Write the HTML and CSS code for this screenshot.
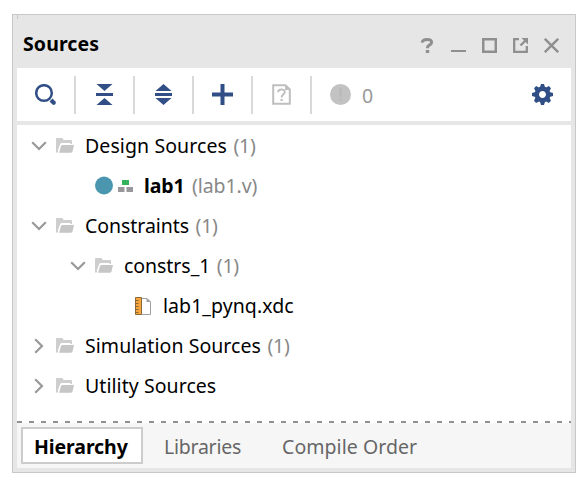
FILE: index.html
```html
<!DOCTYPE html>
<html lang="en">
<head>
<meta charset="utf-8">
<title>Sources</title>
<link rel="stylesheet" href="styles.css">
</head>
<body>
<svg class="defs" width="0" height="0">
  <symbol id="down" viewBox="0 0 16 10"><path d="M1.2 1.2 8 8l6.800-6.800" fill="none" stroke="#999" stroke-width="2.200"/></symbol>
  <symbol id="right" viewBox="0 0 10 16"><path d="M1.200 1.200 8 8l-6.800 6.800" fill="none" stroke="#999" stroke-width="2.200"/></symbol>
  <symbol id="folder" viewBox="0 0 18 15"><path d="M0 14.500V1Q0 0 1 0H6.500L7.500 2H15Q16 2 16 3V6H14.500V5H5.500Q4.500 5 4 6.500L2 12V14.500Z" fill="#cecece"/><path d="M6.500 7H18L16.500 13.500Q16 14.800 14.700 14.800H3L5 8.300Q5.400 7 6.500 7Z" fill="#c6c6c6"/></symbol>
</svg>
<main class="panel">
  <header class="title">
    <h1>Sources</h1>
    <div class="controls">
      <svg width="15" height="17" viewBox="0 0 15 17"><path d="M2.200 5.600Q2.500 2.400 7 2.400 11.600 2.400 11.600 5.300 11.600 7 9.300 8.100 7.400 9 7.400 11.300" fill="none" stroke="#8f8f8f" stroke-width="3"/><path d="M5.800 13h3.400v3H5.800z" fill="#8f8f8f"/></svg>
      <svg width="15" height="15"><path d="M0 12h15v2H0z" fill="#8f8f8f"/></svg>
      <svg width="15" height="15"><path d="M1.250 1.250h12.500v12.500H1.250z" fill="none" stroke="#8f8f8f" stroke-width="2.500"/></svg>
      <svg width="15" height="15"><path d="M6 1.200H1.200V13.800H13.800V8M7.500 7.500 12.500 2.500" fill="none" stroke="#8f8f8f" stroke-width="2.300"/><path d="M8.500 0H15V6.500Z" fill="#8f8f8f"/></svg>
      <svg width="15" height="15"><path d="M.8.8 14.200 14.200M14.200.8.8 14.200" stroke="#8f8f8f" stroke-width="2.400"/></svg>
    </div>
  </header>
  <div class="toolbar">
    <div class="tool"><svg width="21" height="21"><circle cx="9" cy="9" r="7.800" fill="none" stroke="#314f86" stroke-width="2.500"/><path d="m14.500 17.500 3-3 3 3q.8 1.500-.3 2.700t-2.700.3z" fill="#314f86"/></svg></div>
    <div class="tool"><svg width="17" height="21" fill="#314f86"><path d="M.5 0h16l-8 7zM0 9h17v3H0zM.5 21h16l-8-7z"/></svg></div>
    <div class="tool"><svg width="17" height="21" fill="#314f86"><path d="M.5 7h16l-8-7zM0 9h17v3H0zM.5 14h16l-8 7z"/></svg></div>
    <div class="tool"><svg width="21" height="21" fill="#314f86"><path d="M8.500 0h4v8.500H21v4h-8.500V21h-4v-8.500H0v-4h8.500z"/></svg></div>
    <div class="tool"><svg width="19" height="21"><path d="M1.200 1.200H13.500L17.800 5.500V19.800H1.200Z" fill="none" stroke="#bfbfbf" stroke-width="2"/><path d="M13 1v5h5z" fill="#bfbfbf"/><path d="M6.200 8.200C6 4.500 12.800 4.500 12.800 8 12.800 10.200 9.600 10.300 9.600 13.500" fill="none" stroke="#bfbfbf" stroke-width="2"/><path d="M8.500 15h2.200v2H8.500z" fill="#bfbfbf"/></svg></div>
    <div class="messages"><svg width="21" height="21"><circle cx="10.500" cy="10.500" r="10.500" fill="#c2c2c2"/><path d="M9.300 4h2.500v9H9.300zM9.300 14.500h2.500V17H9.300z" fill="#bababa"/></svg><span>0</span></div>
    <div class="settings"><svg width="21" height="21" viewBox="-10.500 -10.500 21 21"><circle r="5.700" fill="none" stroke="#314f86" stroke-width="4.400"/><g fill="#314f86"><path id="teeth" d="M-2.600-7-1.500-10.500h3L2.600-7zM-2.600 7-1.500 10.500h3L2.600 7zM-7-2.600-10.500-1.500v3L-7 2.600zM7-2.600 10.500-1.500v3L7 2.600z"/><use href="#teeth" transform="rotate(45)"/></g></svg></div>
  </div>
  <div class="tree">
    <div class="row"><svg class="down"><use href="#down"/></svg><svg class="folder"><use href="#folder"/></svg><span class="design">Design Sources</span><em>(1)</em></div>
    <div class="row module"><svg width="39" height="20"><circle cx="9" cy="9.500" r="9" fill="#4a96ae"/><path d="M27 4h7v5h-7z" fill="#34b35d"/><path d="M23 11h6.500v5H23zM31.500 11H38v5h-6.500z" fill="#97979c"/></svg><b>lab1</b><em class="file">(lab1.v)</em></div>
    <div class="row"><svg class="down"><use href="#down"/></svg><svg class="folder"><use href="#folder"/></svg><span class="constraints">Constraints</span><em>(1)</em></div>
    <div class="row nested"><svg class="down"><use href="#down"/></svg><svg class="folder"><use href="#folder"/></svg><span class="set">constrs_1</span><em>(1)</em></div>
    <div class="row leaf"><svg width="17" height="19"><path d="M7 1.500H12L15.500 5V17.500H7" fill="#fff" stroke="#a0a0a0"/><path d="M11.500 1v4H16z" fill="#a0a0a0"/><path d="M.5.500H6.500V17.500H.5z" fill="#f6a63c" stroke="#8c6737"/><path d="M1 3.500h2.500m-2.500 3h2.500m-2.500 3h2.500m-2.500 3h2.500m-2.500 3h2.500" stroke="#8c6737"/></svg><span class="xdc">lab1_pynq.xdc</span></div>
    <div class="row"><svg class="right"><use href="#right"/></svg><svg class="folder"><use href="#folder"/></svg><span class="simulation">Simulation Sources</span><em>(1)</em></div>
    <div class="row"><svg class="right"><use href="#right"/></svg><svg class="folder"><use href="#folder"/></svg><span class="utility">Utility Sources</span></div>
  </div>
  <nav class="tabs">
    <div class="tab active">Hierarchy</div>
    <div class="tab libraries">Libraries</div>
    <div class="tab order">Compile Order</div>
  </nav>
</main>
</body>
</html>
```

FILE: styles.css
```css
* { box-sizing: border-box; }
body { margin: 0; padding: 14px 0 0 12px; background: #fff; color: #000; font: 19.5px/40px "Noto Sans", "Open Sans", sans-serif; white-space: nowrap; }
svg { display: block; flex: none; }
.defs { position: absolute; }
.panel { width: 564px; height: 459px; padding: 0 4px 4px; border: 1px solid #c8c8c8; background: #e6e6e6; display: flex; flex-direction: column; }
.title { height: 53px; padding: 5px 12px 0 6px; display: flex; justify-content: space-between; align-items: center; background: linear-gradient(#c8c8c8, #c8c8c8) 0 0 / 1px 4px no-repeat; }
h1 { margin: 0; font-size: 19.5px; line-height: 40px; letter-spacing: .1px; }
.controls { display: flex; align-items: center; gap: 16px; padding-top: 2px; }
.toolbar { height: 53px; background: #fff; display: flex; align-items: center; margin-bottom: 4px; }
.tool { width: 59px; height: 38px; border-right: 2px solid #d9d9d9; display: flex; align-items: center; justify-content: center; }
.messages { display: flex; align-items: center; gap: 11px; margin-left: 18px; color: #999; }
.messages span { padding-top: 2px; }
.settings { margin-left: auto; margin-right: 18px; }
.tree { height: 296px; background: #fff; padding-top: 1px; }
.row { height: 40px; padding-left: 14px; display: flex; align-items: center; }
.design { letter-spacing: .1px; }
.constraints, .set { letter-spacing: -.05px; }
.simulation, .utility, .xdc { letter-spacing: .06px; }
.module { padding-left: 78px; }
.nested { padding-left: 53px; }
.leaf { padding-left: 118px; }
.down { width: 16px; height: 10px; margin-right: 9px; }
.right { width: 10px; height: 16px; margin: 0 12px 0 3px; }
.folder { width: 18px; height: 15px; margin: 0 11px 2px 0; }
.module svg { margin-right: 10px; }
.module b { letter-spacing: -.1px; }
.leaf svg { margin-right: 11px; }
em { font-style: normal; color: #888; margin-left: 6.500px; letter-spacing: -.3px; }
.file { margin-left: 7.500px; letter-spacing: -.1px; }
.tabs { height: 47px; padding: 6px 0 0 4px; display: flex; color: #666; background: repeating-linear-gradient(90deg, #919191 0 5px, #fff 5px 12px) 0 0 / 100% 2px no-repeat, #f6f6f6; }
.tab { height: 37px; line-height: 39px; }
.active { width: 122px; border: 2px solid #ccc; background: #fff; color: #000; font-weight: 700; padding-left: 11px; line-height: 35px; letter-spacing: -.1px; }
.libraries { width: 117px; padding-left: 21px; letter-spacing: -.25px; }
.order { padding-left: 22px; letter-spacing: .06px; }
```
